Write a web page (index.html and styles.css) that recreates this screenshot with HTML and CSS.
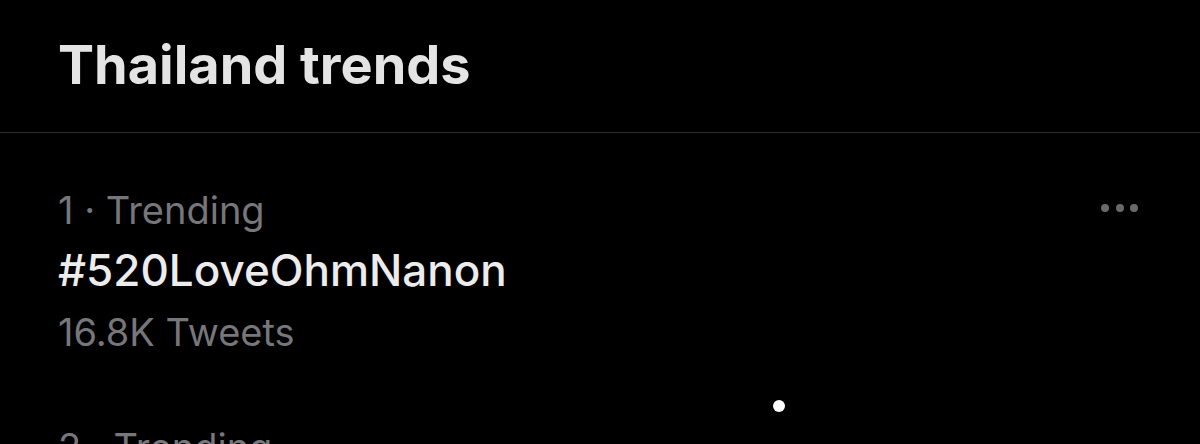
FILE: index.html
```html
<!DOCTYPE html>
<html>
<head>
<meta charset="utf-8">
<link rel="stylesheet" href="styles.css">
</head>
<body>
<div class="page">
  <header class="head">
    <h1 class="title">Thailand trends</h1>
  </header>
  <div class="trend">
    <div class="trend-top">
      <div class="meta">1 · Trending</div>
      <div class="more"><span></span><span></span><span></span></div>
    </div>
    <div class="tag">#520LoveOhmNanon</div>
    <div class="count">16.8K Tweets</div>
  </div>
  <div class="dot"></div>
  <div class="trend next">
    <div class="meta">2 · Trending</div>
  </div>
</div>
</body>
</html>
```
FILE: styles.css
```css
html, body {
  margin: 0;
  padding: 0;
  background: #000;
  width: 1200px;
  height: 444px;
  overflow: hidden;
}
.page {
  font-family: Inter, "Noto Sans", sans-serif;
  color: #e4e4e4;
}
.head {
  height: 133px;
  border-bottom: 1px solid #2c2c2e;
  box-sizing: border-box;
  padding: 30px 58px 0;
}
.title {
  margin: 0;
  font-size: 54px;
  font-weight: 700;
  line-height: 70px;
  letter-spacing: 0;
}
.trend {
  padding: 53px 58px 0;
}
.trend-top {
  display: flex;
  justify-content: space-between;
  align-items: center;
}
.meta {
  font-size: 38px;
  line-height: 48px;
  color: #76767b;
}
.more {
  display: flex;
  gap: 6.5px;
  margin-right: 4px;
  margin-top: -4px;
}
.more span {
  width: 8px;
  height: 8px;
  border-radius: 50%;
  background: #6a6a6c;
}
.tag {
  font-size: 44px;
  font-weight: 500;
  line-height: 72px;
  color: #ececec;
}
.count {
  font-size: 38px;
  line-height: 52px;
  color: #76767b;
}
.dot {
  position: absolute;
  left: 773px;
  top: 400px;
  width: 12px;
  height: 12px;
  border-radius: 50%;
  background: #fff;
}
.next {
  padding-top: 65px;
}
```
